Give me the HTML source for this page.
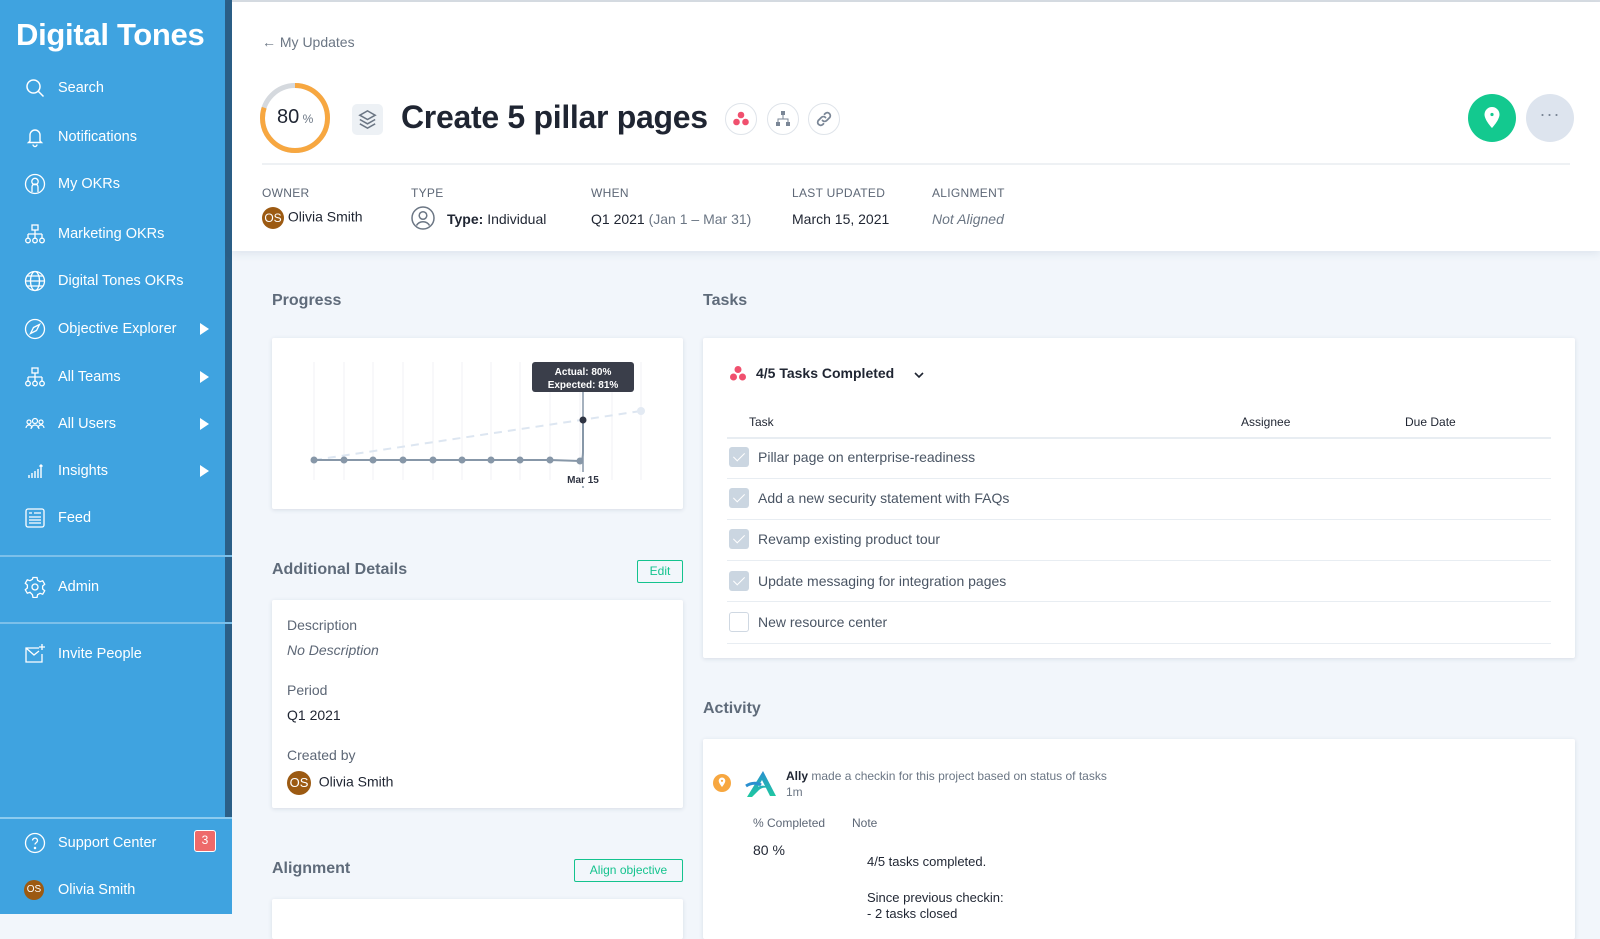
<!DOCTYPE html>
<html><head><meta charset="utf-8"><style>
*{margin:0;padding:0;box-sizing:border-box}
body{width:1600px;height:914px;overflow:hidden;font-family:"Liberation Sans",sans-serif;background:#f2f6fb;position:relative;color:#1f2532}
.a{position:absolute;white-space:nowrap}
#sb{position:absolute;left:0;top:0;width:225px;height:914px;background:#3fa3e0}
#sb2{position:absolute;left:0;top:818px;width:232px;height:96px;background:#3fa3e0}
#stripe{position:absolute;left:225px;top:0;width:7px;height:818px;background:#2b5f87}
.nav{position:absolute;left:58px;color:#fff;font-size:14.5px;transform:translateY(-50%)}
.ic{position:absolute;left:24px;width:22px;height:22px;transform:translateY(-50%)}
.arr{position:absolute;left:200px;width:0;height:0;border-left:9px solid #fff;border-top:6px solid transparent;border-bottom:6px solid transparent;transform:translateY(-50%)}
.hl{position:absolute;left:0;width:232px;height:2px;background:#7cc0ea}
#hdr{position:absolute;left:232px;top:2px;width:1368px;height:249px;background:#fff;box-shadow:0 3px 8px rgba(60,90,130,.10)}
.lbl{font-size:12px;color:#5d6776;letter-spacing:.3px}
.val{font-size:14px;color:#1f2532}
.card{position:absolute;background:#fff;box-shadow:0 1px 4px rgba(60,80,110,.15);border-radius:2px}
.h2{font-size:16px;font-weight:bold;color:#5f6b7a}
.row{position:absolute;left:727px;width:824px;height:1px;background:#e8edf2}
.cb{position:absolute;left:729px;width:20px;height:20px;border-radius:3px;background:#cbd6e1;transform:translateY(-50%)}
.cb:after{content:"";position:absolute;left:7px;top:3px;width:5px;height:10px;border:solid #fff;border-width:0 1.5px 1.5px 0;transform:rotate(45deg)}
.tt{position:absolute;left:758px;font-size:14px;color:#4a5564;transform:translateY(-50%)}
.btn{position:absolute;border:1px solid #14c38e;color:#14c38e;font-size:12px;text-align:center;border-radius:2px}
.av{display:inline-block;border-radius:50%;background:#9c5a12;color:#fff;text-align:center}
</style></head><body>
<div style="position:absolute;left:232px;top:0;width:1368px;height:2px;background:#d8dde3"></div>
<div id="sb"></div><div id="sb2"></div><div id="stripe"></div>
<div class="a" style="left:16px;top:17px;font-size:31px;font-weight:bold;color:#fff;letter-spacing:-.3px">Digital Tones</div>

<svg class="ic" style="top:88px" viewBox="0 0 22 22" fill="none" stroke="#fff" stroke-width="1.5"><circle cx="9.5" cy="9.5" r="6.5"/><path d="M14.5 14.5l5 5"/></svg><div class="nav" style="top:88px">Search</div>
<svg class="ic" style="top:137px" viewBox="0 0 22 22" fill="none" stroke="#fff" stroke-width="1.4"><path d="M6 15V9a5 5 0 0110 0v6l1.5 1.5h-13zM9 18.5a2 2 0 004 0"/></svg><div class="nav" style="top:137px">Notifications</div>
<svg class="ic" style="top:184px" viewBox="0 0 22 22" fill="none" stroke="#fff" stroke-width="1.3"><circle cx="11" cy="11" r="9.5"/><circle cx="11" cy="8.5" r="3.2"/><path d="M8 19v-5a3 3 0 016 0v5"/></svg><div class="nav" style="top:184px">My OKRs</div>
<svg class="ic" style="top:234px" viewBox="0 0 22 22" fill="none" stroke="#fff" stroke-width="1.3"><rect x="8" y="2" width="6" height="5"/><path d="M11 7v4M4 11h14M4 11v4M11 11v4M18 11v4"/><circle cx="4" cy="17.5" r="2.3"/><circle cx="11" cy="17.5" r="2.3"/><circle cx="18" cy="17.5" r="2.3"/></svg><div class="nav" style="top:234px">Marketing OKRs</div>
<svg class="ic" style="top:281px" viewBox="0 0 22 22" fill="none" stroke="#fff" stroke-width="1.3"><circle cx="11" cy="11" r="9.5"/><ellipse cx="11" cy="11" rx="4.5" ry="9.5"/><path d="M1.5 11h19M3 6h16M3 16h16"/></svg><div class="nav" style="top:281px">Digital Tones OKRs</div>
<svg class="ic" style="top:329px" viewBox="0 0 22 22" fill="none" stroke="#fff" stroke-width="1.3"><circle cx="11" cy="11" r="9.5"/><path d="M15.5 6.5l-3 6-6 3 3-6z"/></svg><div class="nav" style="top:329px">Objective Explorer</div><div class="arr" style="top:329px"></div>
<svg class="ic" style="top:377px" viewBox="0 0 22 22" fill="none" stroke="#fff" stroke-width="1.3"><rect x="8" y="2" width="6" height="5"/><path d="M11 7v4M4 11h14M4 11v4M11 11v4M18 11v4"/><circle cx="4" cy="17.5" r="2.3"/><circle cx="11" cy="17.5" r="2.3"/><circle cx="18" cy="17.5" r="2.3"/></svg><div class="nav" style="top:377px">All Teams</div><div class="arr" style="top:377px"></div>
<svg class="ic" style="top:424px" viewBox="0 0 22 22" fill="none" stroke="#fff" stroke-width="1.2"><circle cx="5" cy="9" r="2"/><circle cx="11" cy="8" r="2.5"/><circle cx="17" cy="9" r="2"/><path d="M2 15a3 3 0 016 0M7 16a4 4 0 018 0M14 15a3 3 0 016 0"/></svg><div class="nav" style="top:424px">All Users</div><div class="arr" style="top:424px"></div>
<svg class="ic" style="top:471px" viewBox="0 0 22 22" fill="none" stroke="#fff" stroke-width="1.4"><path d="M5 18v-3M8 18v-5M11 18v-7M14 18v-9M17 18V5M15.5 6.5L17 5l1.5 1.5"/></svg><div class="nav" style="top:471px">Insights</div><div class="arr" style="top:471px"></div>
<svg class="ic" style="top:518px" viewBox="0 0 22 22" fill="none" stroke="#fff" stroke-width="1.3"><rect x="2" y="2" width="18" height="18" rx="2"/><path d="M5 6h3M10 6h7M5 10h12M5 13h12M5 16h12"/></svg><div class="nav" style="top:518px">Feed</div>
<div class="hl" style="top:555px"></div>
<svg class="ic" style="top:587px" viewBox="0 0 22 22" fill="none" stroke="#fff" stroke-width="1.3"><circle cx="11" cy="11" r="3"/><path d="M9 1.5h4l.6 2.8 2.4 1.4 2.7-.9 2 3.4-2.1 1.9v2.8l2.1 1.9-2 3.4-2.7-.9-2.4 1.4-.6 2.8H9l-.6-2.8L6 16.3l-2.7.9-2-3.4 2.1-1.9V9.1L1.3 7.2l2-3.4 2.7.9 2.4-1.4z"/></svg><div class="nav" style="top:587px">Admin</div>
<div class="hl" style="top:622px"></div>
<svg class="ic" style="top:654px" viewBox="0 0 22 22" fill="none" stroke="#fff" stroke-width="1.3"><path d="M15 5H2v14h16v-8"/><path d="M2 5l8 7 5-4M18 1v6M15 4h6"/></svg><div class="nav" style="top:654px">Invite People</div>
<div class="hl" style="top:817px;background:#8ccbef"></div>
<svg class="ic" style="top:843px" viewBox="0 0 22 22" fill="none" stroke="#fff" stroke-width="1.3"><circle cx="11" cy="11" r="9.5"/><path d="M8.5 8.5a2.5 2.5 0 115 .3c0 1.7-2.5 2-2.5 3.7"/><circle cx="11" cy="16" r=".6" fill="#fff"/></svg><div class="nav" style="top:843px">Support Center</div>
<div class="a" style="left:194px;top:830px;width:22px;height:22px;background:#ee6a6a;border:1.5px solid #fff;border-radius:3px;color:#fff;font-size:12px;text-align:center;line-height:19px">3</div>
<div class="a av" style="left:24px;top:880px;width:20px;height:20px;font-size:10px;line-height:20px">OS</div><div class="nav" style="top:890px">Olivia Smith</div>

<div id="hdr"></div>
<div class="a" style="left:262px;top:34px;font-size:14px;color:#6b7684">← My Updates</div>
<svg class="a" style="left:259px;top:82px" width="72" height="72" viewBox="0 0 72 72"><circle cx="36" cy="36" r="32.5" fill="none" stroke="#d5d9de" stroke-width="5"/><circle cx="36" cy="36" r="32.5" fill="none" stroke="#f7a740" stroke-width="5" stroke-dasharray="163.4 204.2" transform="rotate(-90 36 36)"/></svg>
<div class="a" style="left:277px;top:106px;font-size:20px;color:#1f2532">80<span style="font-size:12px;color:#6b7684"> %</span></div>
<div class="a" style="left:352px;top:104px;width:31px;height:31px;background:#edf1f5;border-radius:5px"></div>
<svg class="a" style="left:356px;top:108px" width="23" height="23" viewBox="0 0 24 24" fill="none" stroke="#6b7684" stroke-width="1.6"><path d="M12 3l8 4.5-8 4.5-8-4.5z"/><path d="M4 12l8 4.5 8-4.5M4 16.5L12 21l8-4.5"/></svg>
<div class="a" style="left:401px;top:99px;font-size:32px;font-weight:bold;color:#1f2532;letter-spacing:-.3px">Create 5 pillar pages</div>
<div class="a" style="left:725px;top:103px;width:32px;height:32px;border:1px solid #dfe4ea;border-radius:50%"></div>
<svg class="a" style="left:731px;top:109px" width="20" height="20" viewBox="0 0 20 20"><circle cx="10" cy="6" r="3.3" fill="#f0506e"/><circle cx="5.5" cy="13" r="3.3" fill="#f0506e"/><circle cx="14.5" cy="13" r="3.3" fill="#f0506e"/></svg>
<div class="a" style="left:767px;top:103px;width:32px;height:32px;border:1px solid #dfe4ea;border-radius:50%"></div>
<svg class="a" style="left:773px;top:109px" width="20" height="20" viewBox="0 0 20 20" fill="#7a8696"><rect x="8" y="2" width="4" height="4"/><rect x="3" y="13" width="4" height="4"/><rect x="13" y="13" width="4" height="4"/><path d="M9.5 6h1v3.5h5V13h-1v-2.5h-9V13h-1V9.5h5z"/></svg>
<div class="a" style="left:808px;top:103px;width:32px;height:32px;border:1px solid #dfe4ea;border-radius:50%"></div>
<svg class="a" style="left:814px;top:109px" width="20" height="20" viewBox="0 0 20 20" fill="none" stroke="#7a8696" stroke-width="1.8" stroke-linecap="round"><path d="M8.5 11.5a3 3 0 004.2 0l3-3a3 3 0 00-4.2-4.2l-1 1M11.5 8.5a3 3 0 00-4.2 0l-3 3a3 3 0 004.2 4.2l1-1"/></svg>
<div class="a" style="left:1468px;top:94px;width:48px;height:48px;border-radius:50%;background:#13c98f"></div>
<svg class="a" style="left:1482px;top:106px" width="20" height="24" viewBox="0 0 20 24"><path d="M10 1a7.5 7.5 0 017.5 7.5C17.5 14 10 22 10 22S2.5 14 2.5 8.5A7.5 7.5 0 0110 1z" fill="#fff"/><circle cx="10" cy="8.5" r="1.6" fill="#13c98f"/></svg>
<div class="a" style="left:1526px;top:94px;width:48px;height:48px;border-radius:50%;background:#dde4ee;color:#7a8696;font-size:18px;text-align:center;line-height:40px;letter-spacing:1px">···</div>
<div class="a" style="left:262px;top:163px;width:1308px;height:2px;background:#eef1f4"></div>
<div class="a lbl" style="left:262px;top:186px">OWNER</div>
<div class="a" style="left:262px;top:207px;font-size:14px"><span class="av" style="width:22px;height:22px;line-height:22px;font-size:12px;vertical-align:middle">OS</span> Olivia Smith</div>
<div class="a lbl" style="left:411px;top:186px">TYPE</div>
<svg class="a" style="left:411px;top:206px" width="24" height="24" viewBox="0 0 24 24" fill="none" stroke="#6b7684" stroke-width="1.5"><circle cx="12" cy="12" r="11"/><circle cx="12" cy="9.5" r="3.8"/><path d="M5.5 19.5a7.5 7.5 0 0113 0"/></svg>
<div class="a val" style="left:447px;top:211px"><b>Type:</b> Individual</div>
<div class="a lbl" style="left:591px;top:186px">WHEN</div>
<div class="a val" style="left:591px;top:211px">Q1 2021 <span style="color:#6b7684">(Jan 1 – Mar 31)</span></div>
<div class="a lbl" style="left:792px;top:186px">LAST UPDATED</div>
<div class="a val" style="left:792px;top:211px">March 15, 2021</div>
<div class="a lbl" style="left:932px;top:186px">ALIGNMENT</div>
<div class="a val" style="left:932px;top:211px;font-style:italic;color:#6b7684">Not Aligned</div>

<div class="a h2" style="left:272px;top:292px">Progress</div>
<div class="card" style="left:272px;top:338px;width:411px;height:171px"></div>
<svg class="a" style="left:272px;top:338px" width="411" height="171" viewBox="272 338 411 171">
<g stroke="#f0f2f5" stroke-width="1"><path d="M314 362V480M344 362V480M373 362V480M403 362V480M433 362V480M462 362V480M491 362V480M520 362V480M550 362V480M580 362V480M612 362V480M641 362V480"/></g>
<path d="M314 460L641 411" stroke="#dde6f1" stroke-width="2" stroke-dasharray="8 6"/>
<circle cx="641" cy="411" r="4" fill="#e3eaf3"/>
<path d="M314 460H550L580 461Q583 461 583 450V420" stroke="#8797a8" stroke-width="2" fill="none"/>
<path d="M583 392V488" stroke="#8797a8" stroke-width="1.5"/>
<g fill="#8797a8"><circle cx="314" cy="460" r="3.5"/><circle cx="344" cy="460" r="3.5"/><circle cx="373" cy="460" r="3.5"/><circle cx="403" cy="460" r="3.5"/><circle cx="433" cy="460" r="3.5"/><circle cx="462" cy="460" r="3.5"/><circle cx="491" cy="460" r="3.5"/><circle cx="520" cy="460" r="3.5"/><circle cx="550" cy="460" r="3.5"/><circle cx="580" cy="461" r="3.5"/></g>
<circle cx="583" cy="420" r="3.5" fill="#2f3442"/>
<rect x="532" y="362" width="102" height="30" rx="3" fill="#3a3e4a"/>
<text x="583" y="375" fill="#fff" font-size="10" font-weight="bold" text-anchor="middle" font-family="Liberation Sans">Actual: 80%</text>
<text x="583" y="388" fill="#fff" font-size="10" font-weight="bold" text-anchor="middle" font-family="Liberation Sans">Expected: 81%</text>
<rect x="562" y="472" width="42" height="14" fill="#fff"/>
<text x="583" y="483" fill="#2f3442" font-size="10" font-weight="bold" text-anchor="middle" font-family="Liberation Sans">Mar 15</text>
</svg>

<div class="a h2" style="left:272px;top:561px">Additional Details</div>
<div class="btn" style="left:637px;top:560px;width:46px;height:23px;line-height:21px">Edit</div>
<div class="card" style="left:272px;top:600px;width:411px;height:208px"></div>
<div class="a" style="left:287px;top:617px;font-size:14px;color:#5d6776">Description</div>
<div class="a" style="left:287px;top:642px;font-size:14px;color:#5d6776;font-style:italic">No Description</div>
<div class="a" style="left:287px;top:682px;font-size:14px;color:#5d6776">Period</div>
<div class="a" style="left:287px;top:707px;font-size:14px">Q1 2021</div>
<div class="a" style="left:287px;top:747px;font-size:14px;color:#5d6776">Created by</div>
<div class="a" style="left:287px;top:771px;font-size:14px"><span class="av" style="width:24px;height:24px;line-height:24px;font-size:13px;vertical-align:middle">OS</span>&nbsp; Olivia Smith</div>
<div class="a h2" style="left:272px;top:860px">Alignment</div>
<div class="btn" style="left:574px;top:859px;width:109px;height:23px;line-height:21px">Align objective</div>
<div class="card" style="left:272px;top:899px;width:411px;height:40px"></div>

<div class="a h2" style="left:703px;top:292px">Tasks</div>
<div class="card" style="left:703px;top:338px;width:872px;height:320px"></div>
<svg class="a" style="left:728px;top:364px" width="20" height="20" viewBox="0 0 20 20"><circle cx="10" cy="5.5" r="3.5" fill="#f0506e"/><circle cx="5.5" cy="13" r="3.5" fill="#f0506e"/><circle cx="14.5" cy="13" r="3.5" fill="#f0506e"/></svg>
<div class="a" style="left:756px;top:365px;font-size:14px;font-weight:bold;color:#1f2532">4/5 Tasks Completed</div>
<svg class="a" style="left:913px;top:369px" width="12" height="12" viewBox="0 0 12 12" fill="none" stroke="#1f2532" stroke-width="1.6"><path d="M2 4l4 4 4-4"/></svg>
<div class="a" style="left:749px;top:415px;font-size:12px;color:#1f2532">Task</div>
<div class="a" style="left:1241px;top:415px;font-size:12px;color:#1f2532">Assignee</div>
<div class="a" style="left:1405px;top:415px;font-size:12px;color:#1f2532">Due Date</div>
<div class="row" style="top:437px;height:2px"></div>
<div class="cb" style="top:457px"></div><div class="tt" style="top:457px">Pillar page on enterprise-readiness</div>
<div class="row" style="top:478px"></div>
<div class="cb" style="top:498px"></div><div class="tt" style="top:498px">Add a new security statement with FAQs</div>
<div class="row" style="top:519px"></div>
<div class="cb" style="top:539px"></div><div class="tt" style="top:539px">Revamp existing product tour</div>
<div class="row" style="top:560px"></div>
<div class="cb" style="top:581px"></div><div class="tt" style="top:581px">Update messaging for integration pages</div>
<div class="row" style="top:601px"></div>
<div class="a" style="left:729px;top:612px;width:20px;height:20px;border:1px solid #cfd8e2;border-radius:3px;background:#fff"></div><div class="tt" style="top:622px">New resource center</div>
<div class="row" style="top:643px"></div>

<div class="a h2" style="left:703px;top:700px">Activity</div>
<div class="card" style="left:703px;top:739px;width:872px;height:200px"></div>
<svg class="a" style="left:712px;top:773px" width="20" height="20" viewBox="0 0 20 20"><circle cx="10" cy="10" r="9" fill="#f7a740"/><path d="M10 4.5a3.3 3.3 0 013.3 3.3c0 2.4-3.3 6.2-3.3 6.2S6.7 10.2 6.7 7.8A3.3 3.3 0 0110 4.5z" fill="#fff"/><circle cx="10" cy="7.8" r="1.1" fill="#f7a740"/></svg>
<svg class="a" style="left:745px;top:770px" width="32" height="28" viewBox="0 0 32 28"><defs><linearGradient id="g" x1="0" y1="0" x2="0" y2="1"><stop offset="0" stop-color="#2a8fd0"/><stop offset="1" stop-color="#1fc9a0"/></linearGradient></defs><path d="M18 1L31 26h-6L17 10 13 17c3-2 7-2 10 1-4-1-7 0-9 2L7 27H2z" fill="url(#g)"/><path d="M1 16c6-4 12-3 15-1" stroke="#2a8fd0" stroke-width="3" fill="none"/></svg>
<div class="a" style="left:786px;top:769px;font-size:12px;color:#6b7684"><b style="color:#1f2532">Ally</b> made a checkin for this project based on status of tasks</div>
<div class="a" style="left:786px;top:785px;font-size:12px;color:#6b7684">1m</div>
<div class="a" style="left:753px;top:816px;font-size:12px;color:#5d6776">% Completed</div>
<div class="a" style="left:852px;top:816px;font-size:12px;color:#5d6776">Note</div>
<div class="a" style="left:753px;top:842px;font-size:14px">80 %</div>
<div class="a" style="left:867px;top:854px;font-size:13px">4/5 tasks completed.</div>
<div class="a" style="left:867px;top:890px;font-size:13px">Since previous checkin:</div>
<div class="a" style="left:867px;top:906px;font-size:13px">- 2 tasks closed</div>
</body></html>
